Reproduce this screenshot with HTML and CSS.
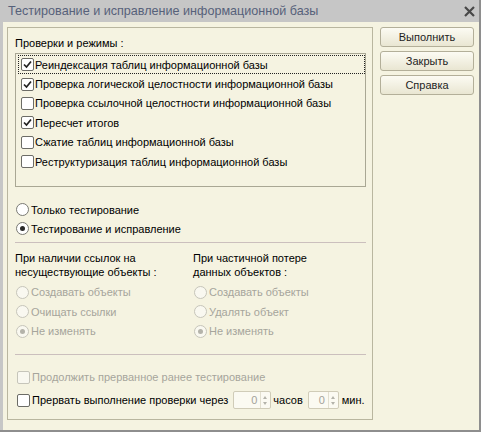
FILE: index.html
```html
<!DOCTYPE html>
<html>
<head>
<meta charset="utf-8">
<link rel="stylesheet" href="styles.css">
</head>
<body>
<div class="window">
  <div class="titlebar">
    <span class="title">Тестирование и исправление информационной базы</span>
    <svg class="close" width="11" height="11" viewBox="0 0 11 11"><path d="M1 1 L10 10 M10 1 L1 10" stroke="#484848" stroke-width="2.2" fill="none"/></svg>
  </div>
  <div class="client">
    <div class="frame">
      <div class="label">Проверки и режимы :</div>
      <div class="list">
        <div class="item focus"><span class="cb"><svg width="11" height="11" viewBox="0 0 11 11"><path d="M2 5.5 L4.5 8 L9 2.5" stroke="#222" stroke-width="1.7" fill="none"/></svg></span><span>Реиндексация таблиц информационной базы</span></div>
        <div class="item"><span class="cb"><svg width="11" height="11" viewBox="0 0 11 11"><path d="M2 5.5 L4.5 8 L9 2.5" stroke="#222" stroke-width="1.7" fill="none"/></svg></span><span>Проверка логической целостности информационной базы</span></div>
        <div class="item"><span class="cb"></span><span>Проверка ссылочной целостности информационной базы</span></div>
        <div class="item"><span class="cb"><svg width="11" height="11" viewBox="0 0 11 11"><path d="M2 5.5 L4.5 8 L9 2.5" stroke="#222" stroke-width="1.7" fill="none"/></svg></span><span>Пересчет итогов</span></div>
        <div class="item"><span class="cb"></span><span>Сжатие таблиц информационной базы</span></div>
        <div class="item"><span class="cb"></span><span>Реструктуризация таблиц информационной базы</span></div>
      </div>
      <div class="modes">
        <div class="opt"><span class="rb"></span><span>Только тестирование</span></div>
        <div class="opt"><span class="rb on"></span><span>Тестирование и исправление</span></div>
      </div>
      <div class="sep"></div>
      <div class="cols">
        <div class="col col-left">
          <div class="head">При наличии ссылок на<br>несуществующие объекты :</div>
          <div class="opts">
            <div class="opt2 dis"><span class="rb"></span><span>Создавать объекты</span></div>
            <div class="opt2 dis"><span class="rb"></span><span>Очищать ссылки</span></div>
            <div class="opt2 dis"><span class="rb on"></span><span>Не изменять</span></div>
          </div>
        </div>
        <div class="col col-right">
          <div class="head">При частичной потере<br>данных объектов :</div>
          <div class="opts">
            <div class="opt2 dis"><span class="rb"></span><span>Создавать объекты</span></div>
            <div class="opt2 dis"><span class="rb"></span><span>Удалять объект</span></div>
            <div class="opt2 dis"><span class="rb on"></span><span>Не изменять</span></div>
          </div>
        </div>
      </div>
      <div class="sep sep2"></div>
      <div class="checks">
        <div class="crow dis"><span class="cb"></span><span>Продолжить прерванное ранее тестирование</span></div>
        <div class="crow"><span class="cb"></span><span>Прервать выполнение проверки через</span>
          <span class="spin spin1"><span class="val">0</span><span class="arrows"><span class="up"></span><span class="down"></span></span></span>
          <span class="unit">часов</span>
          <span class="spin spin2"><span class="val">0</span><span class="arrows"><span class="up"></span><span class="down"></span></span></span>
          <span class="unit unit2">мин.</span>
        </div>
      </div>
    </div>
    <div class="buttons">
      <div class="btn">Выполнить</div>
      <div class="btn">Закрыть</div>
      <div class="btn">Справка</div>
    </div>
  </div>
</div>
</body>
</html>
```
FILE: styles.css
```css
* { box-sizing: border-box; }
html, body { margin: 0; padding: 0; background: #ffffff; }
body {
  font-family: "Liberation Sans", Arial, sans-serif;
  font-size: 11px;
  color: #000;
}
.window {
  width: 481px;
  height: 432px;
  display: flex;
  flex-direction: column;
  background: #c6c6c6;
  border-right: 2px solid #8e8e8e;
  border-bottom: 2px solid #8e8e8e;
}
.titlebar {
  height: 22px;
  display: flex;
  align-items: center;
  padding-left: 8px;
}
.title {
  font-size: 12.6px;
  color: #56617a;
  white-space: nowrap;
}
.close { margin-left: auto; margin-right: 4px; }
.client {
  flex: 1;
  margin-left: 3px;
  background: #f5f3e1;
  display: flex;
  align-items: flex-start;
  padding: 5px 5px 0 4px;
}
.frame {
  width: 366px;
  height: 393px;
  border: 1px solid #b9b69f;
  margin-right: 7px;
  padding: 8px 6px 0 7px;
  display: flex;
  flex-direction: column;
}
.label { line-height: 14px; height: 14px; }
.list {
  margin-top: 3px;
  height: 134px;
  border: 1px solid #a9a794;
  padding-top: 1px;
}
.item {
  height: 19.4px;
  display: flex;
  align-items: center;
  margin-left: 2px;
  padding-left: 3px;
  white-space: nowrap;
}
.item.focus {
  outline: 1px dotted #222;
  outline-offset: -1px;
}
.cb {
  width: 13px;
  height: 13px;
  flex: none;
  border: 1px solid #6c6c66;
  border-radius: 2px;
  background: #ffffff;
  display: flex;
  align-items: center;
  justify-content: center;
  margin-right: 1px;
}
.rb {
  width: 13px;
  height: 13px;
  flex: none;
  border: 1px solid #7a7a74;
  border-radius: 50%;
  background: #ffffff;
  display: flex;
  align-items: center;
  justify-content: center;
  margin-left: 1px;
  margin-right: 2px;
}
.rb.on::after {
  content: "";
  width: 5px;
  height: 5px;
  border-radius: 50%;
  background: #2a2a2a;
}
.modes { margin-top: 13px; }
.opt {
  height: 19px;
  display: flex;
  align-items: center;
  white-space: nowrap;
}
.sep {
  margin-top: 4px;
  height: 1px;
  background: #cbbfbd;
  flex: none;
}
.cols { margin-top: 8px; display: flex; }
.col-left { width: 178px; }
.col-right { flex: 1; }
.head { line-height: 14px; white-space: nowrap; }
.opts { margin-top: 3.5px; }
.opt2 {
  height: 19.5px;
  display: flex;
  align-items: center;
  white-space: nowrap;
}
.dis { color: #a6a59c; }
.dis .rb { border-color: #c6c5ba; background: #f9f8f0; }
.dis .rb.on::after { background: #b4b3aa; }
.dis .cb { border-color: #c6c5ba; background: #f9f8f0; }
.sep2 { margin-top: 13px; }
.checks { margin-top: 12px; display: flex; flex-direction: column; gap: 3px; }
.crow {
  height: 20px;
  display: flex;
  align-items: center;
  white-space: nowrap;
}
.crow .cb { margin-left: 2px; margin-right: 2px; }
.spin {
  height: 18px;
  border: 1px solid #d0ccb8;
  border-radius: 2px;
  background: #fbfaf2;
  display: flex;
  align-items: center;
  flex: none;
}
.spin1 { width: 38px; margin-left: 5px; }
.spin2 { width: 31px; margin-left: 5px; }
.val {
  flex: 1;
  text-align: right;
  color: #a3a29a;
  padding-right: 3px;
  font-size: 11px;
}
.arrows {
  width: 9px;
  height: 16px;
  border-left: 1px solid #e2dfcf;
  display: flex;
  flex-direction: column;
  align-items: center;
  justify-content: center;
  gap: 3px;
  margin-right: 1px;
}
.up, .down { width: 0; height: 0; border-left: 2.5px solid transparent; border-right: 2.5px solid transparent; }
.up { border-bottom: 3px solid #b4b3aa; }
.down { border-top: 3px solid #b4b3aa; }
.unit { margin-left: 2px; }
.unit2 { margin-left: 3px; }
.buttons {
  width: 94px;
  display: flex;
  flex-direction: column;
  gap: 4px;
}
.btn {
  height: 20px;
  border: 1px solid #b3af99;
  border-radius: 3px;
  background: linear-gradient(#fcfbf3, #e9e6d2);
  display: flex;
  align-items: center;
  justify-content: center;
  color: #1e1e1e;
  font-size: 11px;
}
```
